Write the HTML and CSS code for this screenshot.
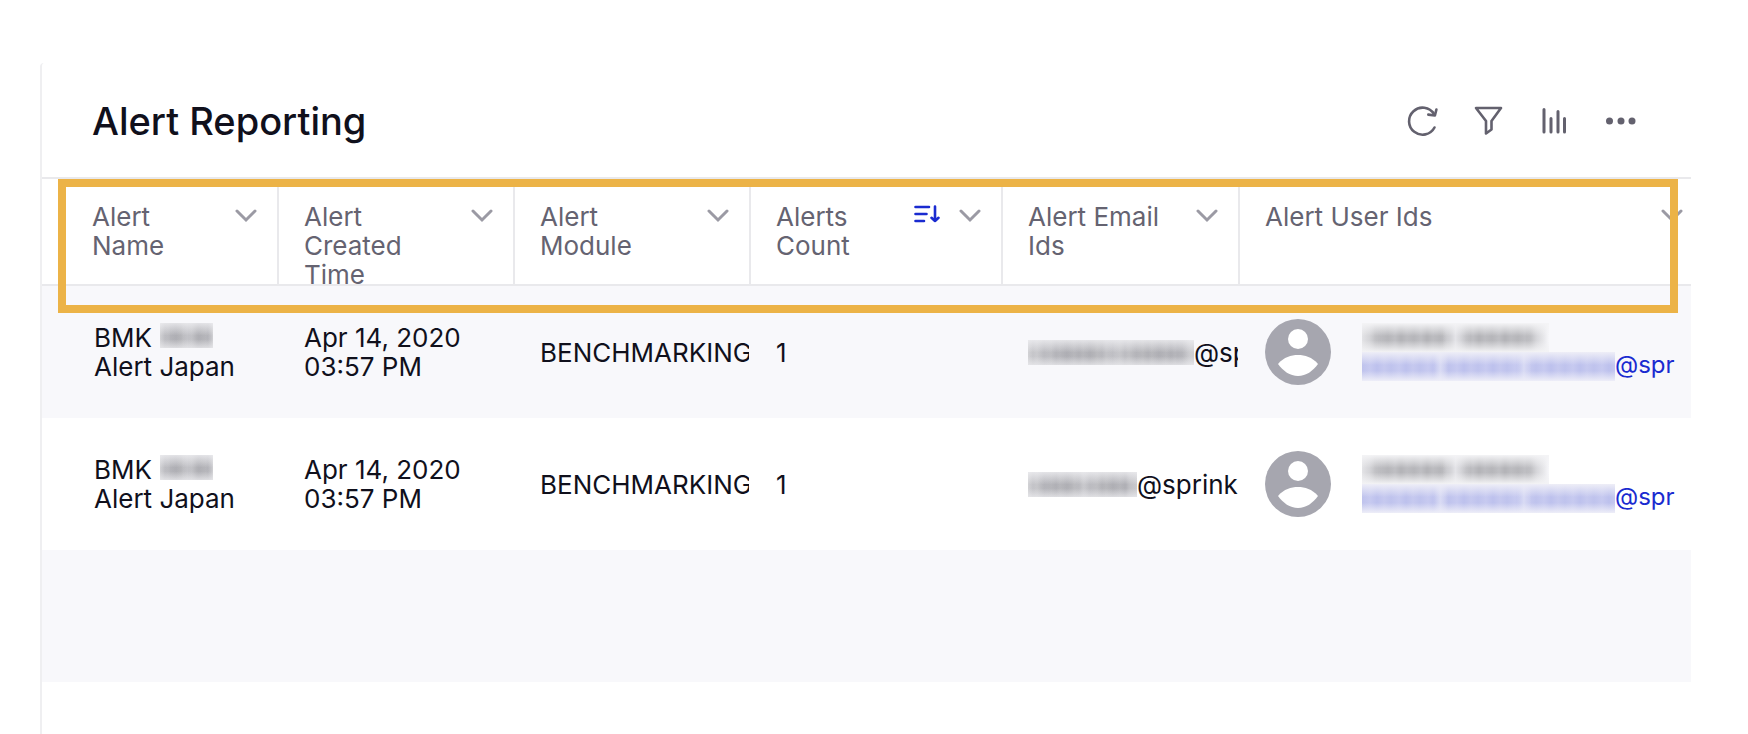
FILE: index.html
```html
<!DOCTYPE html>
<html lang="en">
<head>
<meta charset="utf-8">
<title>Alert Reporting</title>
<link rel="stylesheet" href="styles.css">
</head>
<body>
<svg class="defs" aria-hidden="true">
  <symbol id="chevron" viewBox="0 0 22 14"><path d="M2 2l9 9 9-9" fill="none" stroke="currentColor" stroke-width="3" stroke-linecap="round"/></symbol>
  <symbol id="avatar" viewBox="0 0 66 66"><circle cx="33" cy="33" r="33" fill="#a6a6af"/><circle cx="33" cy="20" r="10" class="cutout"/><path d="M13 45C19 38 26 36 33 36s14 2 20 9C48 52 41 57 33 57s-15-5-20-12z" class="cutout"/></symbol>
</svg>
<main class="panel">
  <header class="panel-header">
    <h1 class="title">Alert Reporting</h1>
    <div class="actions">
      <button class="action" aria-label="Refresh"><svg width="34" height="34" viewBox="0 0 34 34" fill="none" stroke="currentColor" stroke-width="2.600" stroke-linecap="round" stroke-linejoin="round"><path d="M28.500 23.500A13.500 13.500 0 1 1 28 10"/><path d="M22.300 10.600l6.600.9 1.500-6" /></svg></button>
      <button class="action" aria-label="Filter"><svg width="34" height="34" viewBox="0 0 34 34"><path d="M4 4h25L19.500 17v8.500l-5.500 4V17z" fill="none" stroke="currentColor" stroke-width="2.600" stroke-linejoin="round"/></svg></button>
      <button class="action" aria-label="Chart"><svg width="34" height="34" viewBox="0 0 34 34"><path d="M6 5.500V28M13 14.500V28M20 7.500V28M26.500 14.500V28" fill="none" stroke="currentColor" stroke-width="3" stroke-linecap="round"/></svg></button>
      <button class="action" aria-label="More options"><svg width="34" height="34" viewBox="0 0 34 34" fill="currentColor"><circle cx="5.500" cy="17" r="3.500"/><circle cx="17" cy="17" r="3.500"/><circle cx="28" cy="17" r="3.500"/></svg></button>
    </div>
  </header>
  <div class="table-area">
    <table class="alerts">
      <colgroup><col class="col-name"><col class="col-time"><col class="col-module"><col class="col-count"><col class="col-email"><col></colgroup>
      <thead>
        <tr>
          <th scope="col"><div class="head"><span class="label">Alert Name</span><button class="menu" aria-label="Alert Name menu"><svg width="22" height="14"><use href="#chevron"/></svg></button></div></th>
          <th scope="col"><div class="head"><span class="label">Alert Created Time</span><button class="menu" aria-label="Alert Created Time menu"><svg width="22" height="14"><use href="#chevron"/></svg></button></div></th>
          <th scope="col"><div class="head"><span class="label">Alert Module</span><button class="menu" aria-label="Alert Module menu"><svg width="22" height="14"><use href="#chevron"/></svg></button></div></th>
          <th scope="col" aria-sort="descending"><div class="head"><span class="label">Alerts Count</span><button class="menu sort" aria-label="Sort descending"><svg width="26" height="18" viewBox="0 0 26 18" fill="none" stroke="currentColor" stroke-width="2.600" stroke-linecap="round" stroke-linejoin="round"><path d="M1.500 2h13.500M1.500 9h11M1.500 16h8.500M21 1.500V16M17.500 12.800L21 16l3.500-3.200"/></svg></button><button class="menu" aria-label="Alerts Count menu"><svg width="22" height="14"><use href="#chevron"/></svg></button></div></th>
          <th scope="col"><div class="head"><span class="label">Alert Email Ids</span><button class="menu" aria-label="Alert Email Ids menu"><svg width="22" height="14"><use href="#chevron"/></svg></button></div></th>
          <th scope="col"><div class="head"><span class="label">Alert User Ids</span><button class="menu" aria-label="Alert User Ids menu"><svg width="22" height="14"><use href="#chevron"/></svg></button></div></th>
        </tr>
      </thead>
      <tbody>
        <tr>
          <td><div class="cell">BMK <span class="redact redact-word"></span><br>Alert Japan</div></td>
          <td><div class="cell">Apr 14, 2020<br>03:57 PM</div></td>
          <td><div class="cell">BENCHMARKING</div></td>
          <td><div class="cell">1</div></td>
          <td><div class="cell"><span class="redact redact-long"></span>@sp</div></td>
          <td><div class="user"><svg class="avatar" role="img" aria-label="User"><use href="#avatar"/></svg><div class="identity"><span class="redact redact-name"></span><a class="user-mail" href="#"><span class="redact redact-mail"></span>@spr</a></div></div></td>
        </tr>
        <tr>
          <td><div class="cell">BMK <span class="redact redact-word"></span><br>Alert Japan</div></td>
          <td><div class="cell">Apr 14, 2020<br>03:57 PM</div></td>
          <td><div class="cell">BENCHMARKING</div></td>
          <td><div class="cell">1</div></td>
          <td><div class="cell"><span class="redact redact-short"></span>@sprink</div></td>
          <td><div class="user"><svg class="avatar" role="img" aria-label="User"><use href="#avatar"/></svg><div class="identity"><span class="redact redact-name"></span><a class="user-mail" href="#"><span class="redact redact-mail"></span>@spr</a></div></div></td>
        </tr>
        <tr><td></td><td></td><td></td><td></td><td></td><td></td></tr>
      </tbody>
    </table>
    <div class="highlight"></div>
  </div>
</main>
</body>
</html>
```
FILE: styles.css
```css
* { box-sizing: border-box; }
body {
  margin: 0;
  padding: 63px 57px 0 40px;
  background: #fff;
  color: #10101c;
  font-family: Inter, "Liberation Sans", sans-serif;
  font-size: 26px;
  line-height: 29px;
}
button {
  padding: 0;
  border: 0;
  background: none;
  color: inherit;
}
button svg { display: block; }
.defs { display: none; }
.panel {
  min-height: calc(100vh - 63px);
  border-left: 2px solid #efeff1;
  border-top-left-radius: 4px;
}
.panel-header {
  display: flex;
  align-items: center;
  justify-content: space-between;
  padding: 33px 53px 31px 50px;
  border-bottom: 2px solid #e9e9ec;
}
.title {
  margin: 0;
  font-size: 38px;
  font-weight: 500;
  line-height: 50px;
}
.actions {
  display: flex;
  gap: 32px;
  color: #63616e;
}
.table-area {
  position: relative;
  overflow: hidden;
}
.alerts {
  width: 100%;
  table-layout: fixed;
  border-collapse: separate;
  border-spacing: 0;
}
.col-name { width: 237px; }
.col-time { width: 236px; }
.col-module { width: 236px; }
.col-count { width: 252px; }
.col-email { width: 237px; }
th, td {
  padding: 0 0 0 25px;
  text-align: left;
}
th:first-child { padding-left: 50px; }
td:first-child { padding-left: 52px; }
th {
  border-right: 2px solid #e9e9ec;
  border-bottom: 2px solid #e9e9ec;
  color: #656371;
  font-weight: 400;
}
th:last-child { border-right: 0; }
.head {
  display: flex;
  align-items: flex-start;
  gap: 19px;
  height: 105px;
  padding: 23px 20px 0 0;
  overflow: hidden;
}
th:last-child .head { padding-right: 8px; }
.label { flex: 1; }
.menu {
  flex: none;
  padding-top: 7px;
  color: #9b9aa4;
}
.sort {
  padding-top: 3px;
  color: #1a2bd0;
}
td {
  height: 132px;
  vertical-align: middle;
}
tbody tr:nth-child(odd) { background: #f8f8fb; }
.cell {
  overflow: hidden;
  margin-right: 2px;
  white-space: nowrap;
}
.user {
  display: flex;
  align-items: center;
  gap: 31px;
}
.avatar {
  flex: none;
  width: 66px;
  height: 66px;
}
.cutout { fill: #fff; }
.identity {
  display: flex;
  flex-direction: column;
}
.user-mail {
  display: flex;
  color: #1a2bd0;
  font-size: 24px;
  line-height: 25px;
  text-decoration: none;
  white-space: nowrap;
}
.redact {
  display: inline-block;
  height: 25px;
  vertical-align: top;
  background:
    linear-gradient(rgb(240 240 243 / 80%), transparent 50%, transparent 65%, rgb(236 236 239 / 75%)),
    repeating-linear-gradient(90deg, transparent 0, rgb(90 90 105 / 7%) 5px, transparent 9px, rgb(90 90 105 / 9%) 16px, transparent 23px),
    linear-gradient(90deg, #d2d2d5, #b6b6bb 20%, #b8b8bc 40%, #cacace 52%, #b8b8bc 70%, #b6b6bb 90%, #d6d6d9);
}
.redact-word {
  width: 53px;
  margin-left: 1px;
}
.redact-long {
  width: 166px;
  margin-top: 2px;
}
.redact-short {
  width: 109px;
  margin-top: 2px;
}
.redact-name {
  width: 187px;
  height: 29px;
  background:
    linear-gradient(#f4f4f6, transparent 45%, transparent 60%, #f3f3f5),
    linear-gradient(90deg, #e4e4e7, transparent 10%, transparent 43%, #e4e4e8 50%, transparent 58%, transparent 88%, #f7f7fa),
    repeating-linear-gradient(90deg, #b6b6ba 0, #bfbfc3 7px, #b3b3b7 13px, #bcbcc0 19px, #b6b6ba 26px);
}
.redact-mail {
  width: 253px;
  height: 29px;
  background:
    linear-gradient(#eeeef7, transparent 45%, transparent 65%, #eeeef8),
    linear-gradient(90deg, transparent 28%, #d9dbf4 31%, transparent 34%, transparent 61%, #d9dbf4 64%, transparent 67%),
    repeating-linear-gradient(90deg, #bfc3ed 0, #c7caf0 8px, #bdc1ed 15px, #c6c9ef 22px, #bfc3ed 29px);
}
.highlight {
  position: absolute;
  top: 0;
  left: 16px;
  right: 13px;
  height: 134px;
  border: 8px solid #ecb347;
  pointer-events: none;
}
```
